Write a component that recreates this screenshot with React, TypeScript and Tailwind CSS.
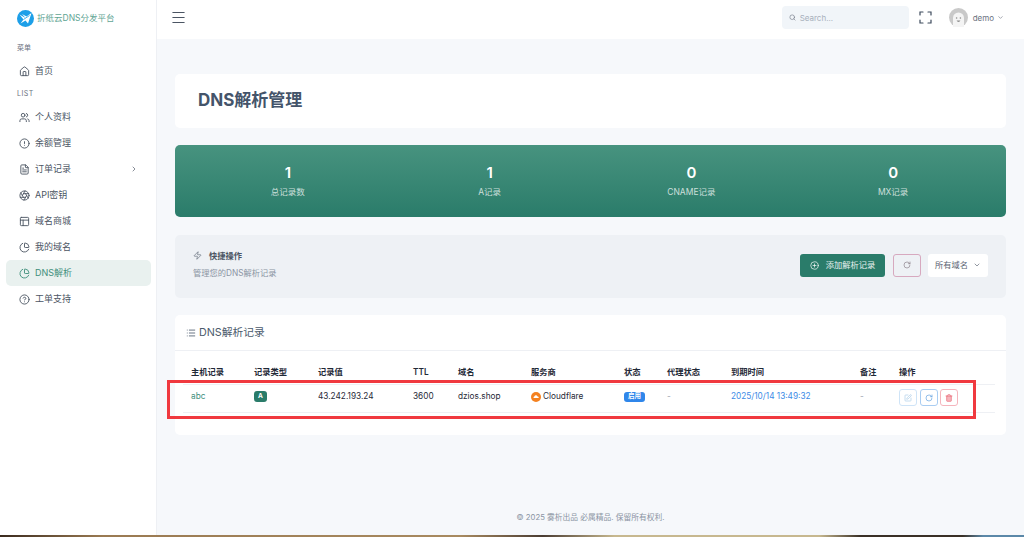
import React from 'react';
import {
  House,
  Users,
  CircleAlert,
  FileText,
  Aperture,
  PanelsTopLeft,
  ChartPie,
  CircleHelp,
  ChevronRight,
  ChevronDown,
  Menu,
  Search,
  Zap,
  CirclePlus,
  RotateCw,
  List,
  Trash2,
  SquarePen,
} from 'lucide-react';

const navItems = [
  { label: '个人资料', icon: Users },
  { label: '余额管理', icon: CircleAlert },
  { label: '订单记录', icon: FileText, arrow: true },
  { label: 'API密钥', icon: Aperture },
  { label: '域名商城', icon: PanelsTopLeft },
  { label: '我的域名', icon: ChartPie },
  { label: 'DNS解析', icon: ChartPie, active: true },
  { label: '工单支持', icon: CircleHelp },
];

const stats = [
  { value: '1', label: '总记录数' },
  { value: '1', label: 'A记录' },
  { value: '0', label: 'CNAME记录' },
  { value: '0', label: 'MX记录' },
];

const columns = [
  { title: '主机记录', width: 'w-[63px]' },
  { title: '记录类型', width: 'w-[64px]' },
  { title: '记录值', width: 'w-[95px]' },
  { title: 'TTL', width: 'w-[45px]' },
  { title: '域名', width: 'w-[73px]' },
  { title: '服务商', width: 'w-[93px]' },
  { title: '状态', width: 'w-[43px]' },
  { title: '代理状态', width: 'w-[64px]' },
  { title: '到期时间', width: 'w-[129px]' },
  { title: '备注', width: 'w-[39px]' },
  { title: '操作', width: 'w-[104px]' },
];

const Logo = () => (
  <svg width="17" height="17" viewBox="0 0 17 17" className="shrink-0">
    <circle cx="8.5" cy="8.5" r="8.5" fill="#1d9fe8" />
    <path d="M2.5 4.5 L8.5 8 L5 4 L9.5 6.5 L14.5 3 L11 13.5 L8.5 10.5 L3.5 13.5 L6.5 9.5 Z" fill="#fff" />
    <path d="M6.5 9.5 L12.5 5.5" stroke="#1d9fe8" strokeWidth="0.8" />
  </svg>
);

const Avatar = () => (
  <svg width="19" height="19" viewBox="0 0 19 19" className="shrink-0">
    <circle cx="9.5" cy="9.5" r="9.5" fill="#c9c9c9" />
    <path d="M4 19 V10 a5.5 5.5 0 0 1 11 0 V19 Z" fill="#f4f4f4" />
    <circle cx="7.6" cy="10" r="0.8" fill="#8b8b8b" />
    <circle cx="11.4" cy="10" r="0.8" fill="#8b8b8b" />
    <path d="M7.6 12.5 a2 2 0 0 0 3.8 0 Z" fill="#8b8b8b" />
  </svg>
);

const FullscreenIcon = () => (
  <svg width="13" height="13" viewBox="0 0 13 13" fill="none" stroke="#3d4a5c" strokeWidth="1.2" strokeLinecap="round">
    <path d="M1 4 V1 H4 M9 1 H12 V4 M12 9 V12 H9 M4 12 H1 V9" />
  </svg>
);

const CloudflareIcon = () => (
  <span className="flex h-[10px] w-[10px] items-center justify-center rounded-full bg-[#f48120]">
    <svg width="6" height="3" viewBox="0 0 7 4">
      <path d="M0.5 4 a1.2 1.2 0 0 1 0.8 -2 a2.2 2.2 0 0 1 4.2 0 a1.1 1.1 0 0 1 1 2 Z" fill="#fff" />
    </svg>
  </span>
);

const Sidebar = () => (
  <aside className="flex w-[157px] shrink-0 flex-col border-r border-[#eef0f4] bg-white">
    <div className="flex h-[36px] items-center pl-[17px] text-[8.5px] text-[#5fa594]">
      <Logo />
      <span className="ml-[3px]">折纸云DNS分发平台</span>
    </div>
    <div className="pl-[17px] pt-[6px] text-[7px] leading-[12px] text-[#6b7280]">菜单</div>
    <div className="ml-[6px] mr-[5px] mt-[4px] flex h-[26px] items-center gap-[5px] pl-[13px] text-[9px] text-[#4b5563]">
      <House size={11} className="text-[#4b5563]" />
      首页
    </div>
    <div className="pl-[17px] pt-[4px] text-[7px] leading-[12px] tracking-[0.5px] text-[#6b7280]">LIST</div>
    <nav className="mt-[4px] flex flex-col">
      {navItems.map((item) => {
        const Icon = item.icon;
        return (
          <div
            key={item.label}
            className={`ml-[6px] mr-[5px] flex h-[26px] items-center gap-[5px] rounded-[5px] pl-[13px] text-[9px] ${
              item.active ? 'bg-[#e9f1ef] text-[#3f8f7c]' : 'text-[#4b5563]'
            }`}
          >
            <Icon size={11} />
            <span className="flex-1">{item.label}</span>
            {item.arrow && <ChevronRight size={8} className="mr-[13px]" />}
          </div>
        );
      })}
    </nav>
  </aside>
);

const Header = () => (
  <header className="flex h-[39px] shrink-0 items-center bg-white pb-[4px] pl-[13px] pr-[20px]">
    <Menu size={17} className="text-[#4b5563]" strokeWidth={1.5} />
    <div className="ml-auto flex h-[23px] w-[127px] items-center gap-[4px] rounded-[4px] bg-[#f1f5f9] pl-[7px] text-[8px] text-[#a8b0bc]">
      <Search size={7} className="text-[#6b7280]" />
      Search...
    </div>
    <div className="ml-[10px]">
      <FullscreenIcon />
    </div>
    <div className="ml-[17px] flex items-center gap-[5px] text-[8px] text-[#6b7280]">
      <Avatar />
      demo
      <ChevronDown size={7} className="-ml-[2px]" />
    </div>
  </header>
);

const StatsBanner = () => (
  <section className="mt-[17px] grid h-[72px] grid-cols-4 rounded-[5px] bg-gradient-to-b from-[#47937f] to-[#2a7c6a] px-[12px] pt-[19px] text-center text-white">
    {stats.map((stat) => (
      <div key={stat.label}>
        <div className="text-[15px] font-semibold leading-[18px]">{stat.value}</div>
        <div className="mt-[4px] text-[8.5px] leading-[12px] text-white/75">{stat.label}</div>
      </div>
    ))}
  </section>
);

const QuickActions = () => (
  <section className="mt-[18px] flex h-[63px] items-center justify-between rounded-[5px] bg-[#eef1f5] pb-[3px] pl-[18px] pr-[18px]">
    <div className="-mt-[2px]">
      <div className="flex items-center gap-[7px] text-[8.25px] font-semibold leading-[12px] text-[#4b5563]">
        <Zap size={9} strokeWidth={1.5} />
        快捷操作
      </div>
      <div className="mt-[5px] text-[8.25px] leading-[12px] text-[#8a94a3]">管理您的DNS解析记录</div>
    </div>
    <div className="flex items-center">
      <button className="flex h-[23px] w-[85px] items-center justify-center gap-[7px] rounded-[3px] bg-[#2a7c6a] text-[8.25px] text-white/90">
        <CirclePlus size={9} />
        添加解析记录
      </button>
      <button className="ml-[8px] flex h-[23px] w-[28px] items-center justify-center rounded-[3px] border border-[#d7a9bf] text-[#8a7f88]">
        <RotateCw size={8} />
      </button>
      <div className="ml-[7px] flex h-[23px] w-[60px] items-center justify-center gap-[5px] rounded-[3px] bg-white text-[8.25px] text-[#5b6472]">
        所有域名
        <ChevronDown size={8} />
      </div>
    </div>
  </section>
);

const RecordsTable = () => (
  <section className="relative mt-[17px] h-[120px] rounded-[5px] bg-white">
    <div className="flex h-[36px] items-center gap-[3px] border-b border-[#eef0f4] pl-[11px] pt-[1px] text-[10.75px] text-[#4b5a6c]">
      <List size={10} />
      DNS解析记录
    </div>
    <table className="ml-[8px] mt-[12px] w-[812px] table-fixed border-collapse text-[8.25px] text-[#1f2937]">
      <thead>
        <tr className="h-[21px] border-b border-[#eef0f4] text-left font-semibold">
          {columns.map((col) => (
            <th key={col.title} className={`${col.width} px-[8px] pb-[3px] font-semibold`}>
              {col.title}
            </th>
          ))}
        </tr>
      </thead>
      <tbody>
        <tr className="h-[28px] border-b border-[#eef0f4]">
          <td className="px-[8px] pb-[3px] text-[#3f8f7c]">abc</td>
          <td className="px-[8px] pb-[3px]">
            <span className="flex h-[11px] w-[13px] items-center justify-center rounded-[3px] bg-[#2a7c6a] text-[6.5px] font-bold text-white">
              A
            </span>
          </td>
          <td className="px-[8px] pb-[3px]">43.242.193.24</td>
          <td className="px-[8px] pb-[3px]">3600</td>
          <td className="px-[8px] pb-[3px]">dzios.shop</td>
          <td className="px-[8px] pb-[3px]">
            <span className="flex items-center gap-[2px]">
              <CloudflareIcon />
              Cloudflare
            </span>
          </td>
          <td className="px-[8px] pb-[3px]">
            <span className="flex h-[10px] w-[21px] items-center justify-center rounded-[3px] bg-[#2f86ea] text-[6.5px] font-semibold text-white">
              启用
            </span>
          </td>
          <td className="px-[8px] pb-[3px] text-[#9ca3af]">-</td>
          <td className="px-[8px] pb-[3px] text-[#3b8ae6]">2025/10/14 13:49:32</td>
          <td className="px-[8px] pb-[3px] text-[#9ca3af]">-</td>
          <td className="px-[8px] pb-[1px]">
            <div className="flex items-center gap-[2.5px]">
              <span className="flex h-[17px] w-[18px] items-center justify-center rounded-[3px] border border-[#cfe4f7] text-[#a9cbe9]">
                <SquarePen size={8} />
              </span>
              <span className="flex h-[17px] w-[18px] items-center justify-center rounded-[3px] border border-[#a9cdf2] text-[#5d9ee0]">
                <RotateCw size={8} />
              </span>
              <span className="flex h-[17px] w-[18px] items-center justify-center rounded-[3px] border border-[#f5b5bd] text-[#ea6673]">
                <Trash2 size={8} fill="#f5b5bd" />
              </span>
            </div>
          </td>
        </tr>
      </tbody>
    </table>
    <div className="pointer-events-none absolute left-[-8px] top-[65px] h-[39px] w-[809px] border-[3px] border-[#f0393f]" />
  </section>
);

export default function App() {
  return (
    <div
      className="flex h-[537px] w-[1024px] flex-col overflow-hidden"
      style={{ fontFamily: 'Inter, "Noto Sans CJK SC", sans-serif' }}
    >
      <div className="flex h-[535px] min-h-0">
        <Sidebar />
        <div className="flex min-w-0 flex-1 flex-col bg-[#f6f8fb]">
          <Header />
          <main className="flex-1 pl-[18px] pr-[18px] pt-[35px]">
            <section className="flex h-[54px] items-center rounded-[5px] bg-white pb-[1px] pl-[23px] text-[17px] font-bold text-[#44546a]">
              DNS解析管理
            </section>
            <StatsBanner />
            <QuickActions />
            <RecordsTable />
          </main>
          <footer className="pb-[12px] text-center text-[7.75px] leading-[12px] text-[#8a94a3]">
            © 2025 雾析出品 必属精品. 保留所有权利.
          </footer>
        </div>
      </div>
      <div className="h-[2px] shrink-0 bg-[linear-gradient(90deg,#3a2a1e_0%,#9a7a52_10%,#a88a60_45%,#4a3c32_53%,#c7b88f_60%,#c7b88f_80%,#3a3026_84%,#3a3026_94%,#5b88a8_96%)]" />
    </div>
  );
}
